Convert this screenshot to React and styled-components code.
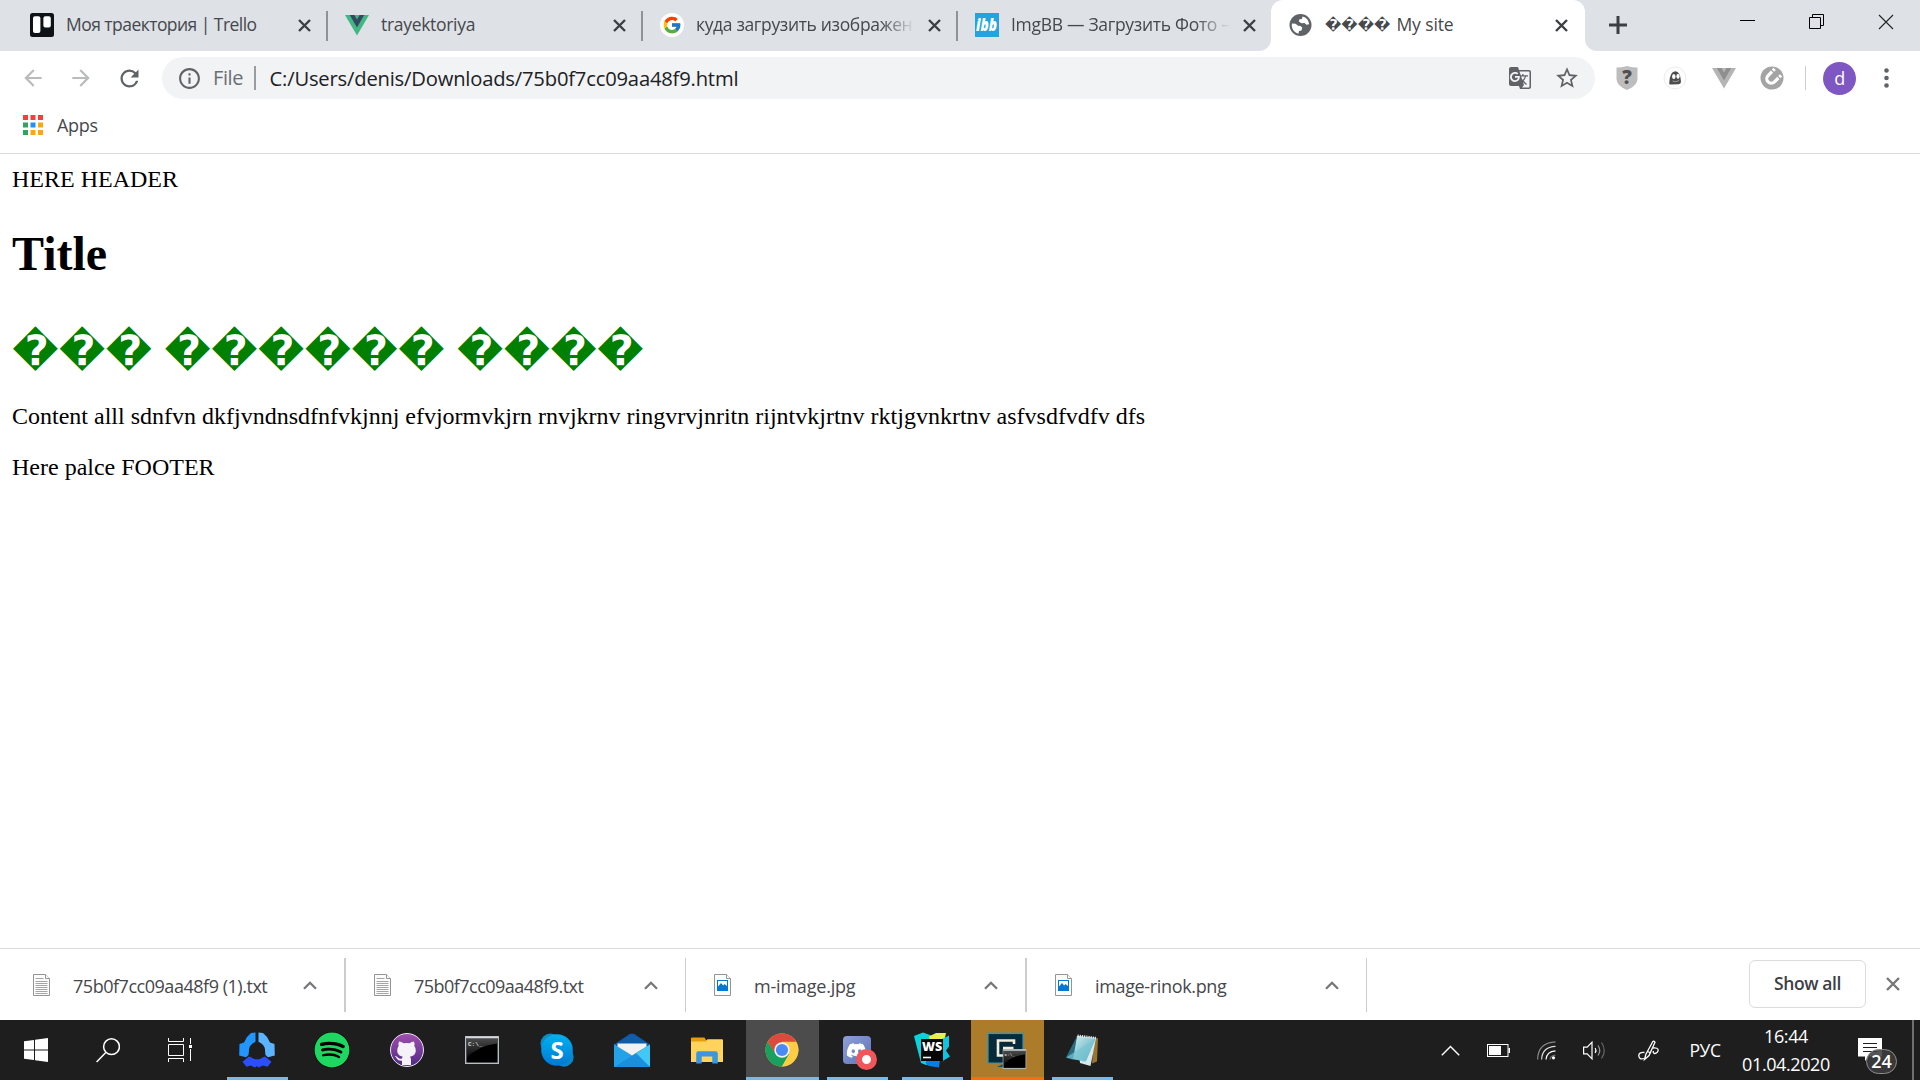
import React from "react";
import styled, { createGlobalStyle, css } from "styled-components";
import {
  MdStarBorder, MdGTranslate, MdInfoOutline, MdArrowBack, MdArrowForward, MdRefresh,
} from "react-icons/md";
import { FcGoogle } from "react-icons/fc";
import { FaSpotify, FaDiscord } from "react-icons/fa";

const GlobalStyle = createGlobalStyle`
  * { box-sizing: border-box; }
  body { margin: 0; background: #fff; overflow: hidden; }
  svg { display: block; flex: none; }
`;

const ui = `"Open Sans", "Noto Sans", sans-serif`;

const Screen = styled.div`
  width: 1920px;
  height: 1080px;
  display: flex;
  flex-direction: column;
  font-family: ${ui};
  background: #fff;
`;

const Label = styled.span`
  font-size: ${(p) => p.$size || 18}px;
  letter-spacing: ${(p) => p.$track || 0}px;
  color: ${(p) => p.$color || "#45484c"};
  line-height: 24px;
  white-space: pre;
`;

/* ---------- tab strip ---------- */

const TabStrip = styled.div`
  flex: none;
  height: 51px;
  padding-left: 12px;
  display: flex;
  background: #dee1e6;
`;

const Tab = styled.div`
  position: relative;
  width: ${(p) => (p.$divider ? 315 : 314)}px;
  height: 51px;
  padding: 0 0 1px 18px;
  display: flex;
  align-items: center;
  ${(p) => p.$divider && css`
    &::after {
      content: "";
      position: absolute;
      right: -1px;
      top: 11px;
      width: 2px;
      height: 30px;
      background: #8f9297;
    }
  `}
  ${(p) => p.$active && css`
    background: #fff;
    border-radius: 12px 12px 0 0;
    &::before, &::after {
      content: "";
      position: absolute;
      bottom: 0;
      width: 12px;
      height: 12px;
    }
    &::before {
      left: -12px;
      background: radial-gradient(circle at 0 0, transparent 11.5px, #fff 12.5px);
    }
    &::after {
      right: -12px;
      background: radial-gradient(circle at 100% 0, transparent 11.5px, #fff 12.5px);
    }
  `}
`;

const TabTitle = styled.div`
  width: 219px;
  height: 26px;
  margin: 0 ${(p) => (p.$gap === undefined ? 7 : p.$gap)}px 2px 12px;
  display: flex;
  align-items: center;
  overflow: hidden;
  white-space: pre;
  ${(p) => p.$fade && css`
    mask-image: linear-gradient(to right, #000 185px, transparent 219px);
  `}
`;

const Unknown = styled.span`
  font-family: "DejaVu Sans", sans-serif;
  font-weight: bold;
  font-size: 14.7px;
  line-height: 24px;
  margin: 2px 6px 0 0;
  color: #45484c;
`;

const CloseBox = styled.div`
  width: 25px;
  height: 24px;
  display: flex;
  align-items: center;
  justify-content: center;
`;

const NewTab = styled.div`
  width: 66px;
  height: 50px;
  display: flex;
  align-items: center;
  justify-content: center;
`;

const WindowButtons = styled.div`
  margin-left: auto;
  height: 43px;
  display: flex;
`;

const WindowButton = styled.div`
  width: 69px;
  display: flex;
  align-items: center;
  justify-content: center;
`;

const GoogleDisc = styled.div`
  width: 24px;
  height: 24px;
  border-radius: 50%;
  background: #fff;
  display: flex;
  align-items: center;
  justify-content: center;
`;

/* ---------- toolbar ---------- */

const Toolbar = styled.div`
  flex: none;
  height: 54px;
  padding: 6px 0 6px 20px;
  display: flex;
  align-items: center;
`;

const NavButtons = styled.div`
  width: 142px;
  display: flex;
  align-items: center;
  gap: 22px;
`;

const Omnibox = styled.div`
  width: 1433px;
  height: 42px;
  border-radius: 21px;
  background: #f1f3f4;
  padding: 0 15px 0 15px;
  display: flex;
  align-items: center;
`;

const Address = styled.div`
  display: flex;
  align-items: center;
  margin-left: 11px;
`;

const Rule = styled.div`
  width: ${(p) => p.$w || 2}px;
  height: 24px;
  margin: 0 ${(p) => p.$right}px 0 ${(p) => p.$left}px;
  background: ${(p) => p.$color};
`;

const OmniActions = styled.div`
  margin-left: auto;
  display: flex;
  align-items: center;
  gap: 22px;
`;

const Extensions = styled.div`
  margin-left: 20px;
  display: flex;
  align-items: center;
`;

const ExtSlot = styled.div`
  width: 24px;
  height: 24px;
  margin-right: 24.3px;
  display: flex;
  align-items: center;
  justify-content: center;
`;

const Avatar = styled.div`
  width: 33px;
  height: 33px;
  margin-right: 28px;
  border-radius: 50%;
  background: #7e57c2;
  color: #fff;
  font-size: 18px;
  line-height: 32px;
  text-align: center;
`;

const Bookmarks = styled.div`
  flex: none;
  height: 49px;
  padding: 0 0 8px 23px;
  border-bottom: 1px solid #d9dadc;
  display: flex;
  align-items: center;
  gap: 14px;
`;

/* ---------- document ---------- */

const Page = styled.main`
  flex: 1;
  padding: 12px;
  font-family: "Liberation Serif", serif;
  font-size: 24px;
  line-height: 27px;
  color: #000;
`;

const Heading = styled.h1`
  margin: 33px 0 31px;
  font-size: 48px;
  line-height: 55px;
  height: 55px;
  font-weight: bold;
  white-space: pre;
`;

const GreenHeading = styled(Heading)`
  margin: 42px 0 25px;
  display: flex;
  gap: 12px;
  align-items: center;
  font-family: "DejaVu Sans", sans-serif;
  font-size: 42px;
  color: #008000;
`;

const Paragraph = styled.p`
  margin: 24px 0;
`;

/* ---------- download shelf ---------- */

const Shelf = styled.div`
  flex: none;
  height: 72px;
  border-top: 1px solid #d9dadc;
  padding: 9px 20px 8px 0;
  display: flex;
`;

const Download = styled.div`
  width: ${(p) => p.$w}px;
  height: 54px;
  padding: 0 27px 0 ${(p) => p.$pad}px;
  border-right: ${(p) => p.$line}px solid #cbcccd;
  display: flex;
  align-items: center;
`;

const FileName = styled.div`
  flex: 1;
  margin-left: 23px;
  padding-top: 2px;
`;

const ShelfEnd = styled.div`
  margin-left: auto;
  height: 52px;
  display: flex;
  align-items: center;
  gap: 20px;
`;

const ShowAll = styled.div`
  width: 117px;
  height: 48px;
  border: 1px solid #dadce0;
  border-radius: 6px;
  color: #3c4043;
  font-size: 17.5px;
  font-weight: 600;
  letter-spacing: -0.4px;
  line-height: 45px;
  text-align: center;
`;

/* ---------- taskbar ---------- */

const Taskbar = styled.div`
  flex: none;
  height: 60px;
  display: flex;
  background: #1e1e1e;
`;

const SystemButton = styled.div`
  width: 72px;
  height: 60px;
  display: flex;
  align-items: center;
  justify-content: center;
`;

const Apps = styled.div`
  display: flex;
  gap: 2px;
  margin-left: 5px;
`;

const tint = { blue: "#76b9ed", orange: "#ff6d00" };

const AppTile = styled.div`
  width: 73px;
  height: 60px;
  display: flex;
  flex-direction: column;
  align-items: center;
  background: ${(p) => p.$bg || "transparent"};
`;

const AppIcon = styled.div`
  height: 57px;
  padding: 3px 2px 0 0;
  display: flex;
  align-items: center;
`;

const Underline = styled.div`
  width: ${(p) => (p.$full ? 73 : 61)}px;
  height: 3px;
  background: ${(p) => tint[p.$tint]};
`;

const SpotifyDisc = styled.div`
  border-radius: 50%;
  background: #000;
`;

const GithubDisc = styled.div`
  width: 34px;
  height: 34px;
  border-radius: 50%;
  border: 1.5px solid #ece6f0;
  background: linear-gradient(#a04fb0, #4f2a84);
  overflow: hidden;
`;

const Tray = styled.div`
  margin-left: auto;
  display: flex;
  align-items: center;
  height: 60px;
`;

const TraySlot = styled.div`
  width: ${(p) => p.$w}px;
  height: 60px;
  padding-left: ${(p) => p.$pad || 0}px;
  display: flex;
  align-items: center;
  justify-content: center;
`;

const Clock = styled.div`
  width: 88px;
  margin-left: 7px;
  display: flex;
  flex-direction: column;
  align-items: center;
  gap: 4px;
  padding-bottom: 1px;
`;

const Notices = styled.div`
  position: relative;
  width: 24px;
  height: 24px;
  margin-left: 28px;
`;

const Badge = styled.div`
  position: absolute;
  left: 8px;
  top: 11px;
  width: 31px;
  height: 25px;
  border-radius: 13px;
  border: 1px solid #8c8c8c;
  background: rgba(62, 62, 62, 0.88);
  color: #fff;
  font-size: 18px;
  font-weight: 600;
  line-height: 22px;
  text-align: center;
`;

const DesktopEdge = styled.div`
  width: 2px;
  height: 60px;
  margin: 0 6px 0 30px;
  background: #6f6f6f;
`;

/* ---------- drawings ---------- */

const Cross = ({ size = 13, color = "#3c4043", width = 2.4 }) => (
  <svg width={size} height={size} viewBox={`0 0 ${size} ${size}`}>
    <path d={`M1 1L${size - 1} ${size - 1}M${size - 1} 1L1 ${size - 1}`} stroke={color} strokeWidth={width} />
  </svg>
);

const Trello = () => (
  <svg width="24" height="24" viewBox="0 0 24 24">
    <rect width="24" height="24" rx="2.5" fill="#0d1317" />
    <rect x="3" y="3.2" width="7.4" height="16.8" rx="2" fill="#fff" />
    <rect x="13.4" y="3.2" width="7.4" height="11.3" rx="2" fill="#fff" />
  </svg>
);

const Ibb = () => (
  <svg width="24" height="24" viewBox="0 0 24 24">
    <rect width="24" height="24" fill="#24a4df" />
    <text x="1" y="18" fontFamily="Open Sans" fontWeight="800" fontStyle="italic" fontSize="17.5" textLength="21" lengthAdjust="spacingAndGlyphs" fill="#fff">ibb</text>
  </svg>
);

const Globe = () => (
  <svg width="24" height="24" viewBox="0 0 24 24">
    <circle cx="11.500" cy="12" r="11" fill="#5f6368" />
    <path d="M2.800 13.500L2.900 10.500 6.500 10.800 9.500 13 11 12.800 13.300 14.500 12.500 17.500 10 18 9.500 20.700Q4 19.500 2.800 13.500z" fill="#fff" />
    <path d="M13.500 3.500Q19.500 5.200 20.200 11.200L17.500 11.800 15.500 10 12.500 10.300 9.800 8.500 10.500 6.300 13 6z" fill="#fff" />
  </svg>
);

const Vue = ({ outer = "#41b883", inner = "#34495e" }) => (
  <svg width="24" height="24" viewBox="0 0 24 24">
    <path d="M0 2h24L12 22.5z" fill={outer} />
    <path d="M4.8 2h4.6L12 6.6 14.6 2h4.6L12 14.4z" fill={inner} />
  </svg>
);

const AppsGrid = () => {
  const colors = ["#f43f3a", "#f43f3a", "#f43f3a", "#34a262", "#2490f5", "#f8a90d", "#34a262", "#f8a90d", "#f8a90d"];
  return (
    <svg width="20" height="20" viewBox="0 0 20 20">
      {colors.map((c, i) => (
        <rect key={i} x={(i % 3) * 7.5} y={Math.floor(i / 3) * 7.5} width="5" height="5" fill={c} />
      ))}
    </svg>
  );
};

const Shield = () => (
  <svg width="22" height="24" viewBox="0 0 22 24">
    <path d="M.5 1.6Q6 1.6 11 0q5 1.6 10.500 1.600V13q0 6.500-10.500 11Q.5 19.500.5 13z" fill="#bdbdbd" />
    <text x="11" y="18" fontFamily="Open Sans" fontWeight="800" fontSize="19" textAnchor="middle" fill="#505050">?</text>
  </svg>
);

const Ghost = () => (
  <svg width="24" height="24" viewBox="0 0 24 24">
    <circle cx="12" cy="12" r="11" fill="#fdfdfd" stroke="#ececec" />
    <path d="M6.200 17.500Q6.500 5.500 12.200 5.200 17.600 5.500 18 15.800 18 18 15.500 18.200L8 18.500Q6.200 18.800 6.200 17.500z" fill="#4c4c4c" />
    <ellipse cx="10.800" cy="10.500" rx="1.700" ry="2.500" fill="#fff" />
    <ellipse cx="15" cy="10.300" rx="1.600" ry="2.500" fill="#fff" />
    <path d="M9.500 15q3.500 1.800 6.500-.6" stroke="#999" fill="none" />
  </svg>
);

const Magnet = () => (
  <svg width="24" height="24" viewBox="0 0 24 24">
    <circle cx="12" cy="12" r="11.500" fill="#a4a4a4" />
    <g transform="rotate(45 12 12)" fill="none" stroke="#fff" strokeWidth="3.200">
      <path d="M7.500 7.500V13a4.500 4.500 0 0 0 9 0V7.500" />
      <path d="M7.500 3.700v2.500M16.500 3.700v2.500" />
    </g>
  </svg>
);

const Dots = () => (
  <svg width="5" height="20" viewBox="0 0 5 20">
    {[2.5, 10, 17.5].map((y) => <circle key={y} cx="2.500" cy={y} r="2.300" fill="#5f6368" />)}
  </svg>
);

const FileIcon = ({ image }) => (
  <svg width="17" height="22" viewBox="0 0 17 22">
    <path d="M.5.5h12l4 4v17H.5z" fill="#fcfcfc" stroke="#949494" />
    <path d="M12.500.5v4h4" fill="#fff" stroke="#949494" />
    {image ? (
      <>
        <rect x="3.500" y="6.500" width="10" height="10" fill="#fff" stroke="#0078d7" />
        <path d="M4 16.500V12.500L7 9l2.200 2.500 1.300-1.500 3 2.500v4z" fill="#0078d7" />
        <rect x="3" y="13" width="11" height="4" fill="#0078d7" />
      </>
    ) : (
      <path d="M2.500 4.500h8M2.500 7.500h12M2.500 9.500h12M2.500 11.500h12M2.500 13.500h12M2.500 15.500h12M2.500 17.500h12M2.500 19.500h12" stroke="#a5a5a5" />
    )}
  </svg>
);

const Chevron = () => (
  <svg width="14" height="9" viewBox="0 0 14 9">
    <path d="M1 7.800L7 1.800l6 6" fill="none" stroke="#757679" strokeWidth="2.300" />
  </svg>
);

const WindowsLogo = () => (
  <svg width="24" height="24" viewBox="0 0 24 24" fill="#fff">
    <path d="M0 3.300L10 2v9.500H0zM11 1.800L24 0v11.500H11zM0 12.500h10V22L0 20.700zM11 12.500h13V24l-13-1.800z" />
  </svg>
);

const SearchGlass = () => (
  <svg width="24" height="25" viewBox="0 0 24 25" fill="none" stroke="#fff" strokeWidth="1.500">
    <circle cx="15.500" cy="8.700" r="7.900" />
    <path d="M9.800 14.500L.6 24" />
  </svg>
);

const TaskView = () => (
  <svg width="24" height="24" viewBox="0 0 24 24" fill="none" stroke="#fff" strokeWidth="1">
    <path d="M.5 0v3.500h15V0M.5 24v-3.500h15V24M.5 6.500h15v11H.5zM22.500 0v6M22.500 11v12" />
    <rect x="21" y="7" width="3" height="3" fill="#fff" stroke="none" />
  </svg>
);

const HubIcon = () => (
  <svg width="36" height="36" viewBox="0 0 36 36">
    <path d="M16.500.5v9.200l-3 1.800q-4 3-3.600 8.200l-.4 3.300-2.500 2.200L.2 23.500.5 12l4.500-1.500L8 5l4-4z" fill="#2196ff" />
    <path d="M19.500.5v9.200l3 1.800q4 3 3.600 8.200l.4 3.300 2.500 2.200 6.800-1.700L35.500 12 31 10.500 28 5l-4-4z" fill="#5bb4ff" />
    <path d="M10 24.500q3 1 4.500 2.300 3.500 1 7 0 1.500-1.300 4.500-2.300l6.500 5.300-4 5L24 33.500 19.500 35.500 18 34l-2 1.500-4.500-2-4 1.200-4-5z" fill="#2b4eff" />
  </svg>
);

const Cmd = ({ w = 34, h = 28 }) => (
  <svg width={w} height={h} viewBox="0 0 34 28">
    <defs>
      <linearGradient id="glass" x1="0" y1="0" x2="0" y2="1">
        <stop offset="0" stopColor="#4b4b4b" />
        <stop offset="1" stopColor="#0a0a0a" />
      </linearGradient>
    </defs>
    <rect x=".7" y=".7" width="32.600" height="26.600" fill="#000" stroke="#b8bfc4" strokeWidth="1.400" />
    <path d="M2 2h30v5.500Q12 10 2 22z" fill="url(#glass)" />
    <path d="M1 1.500h32" stroke="#d5dade" strokeWidth="1.500" />
    <text x="3" y="9.500" fontFamily="Liberation Mono" fontWeight="bold" fontSize="6" fill="#ddd">C:\_</text>
  </svg>
);

const Skype = () => (
  <svg width="34" height="34" viewBox="0 0 34 34">
    <defs>
      <linearGradient id="sky" x1="0" y1="0" x2="0" y2="1">
        <stop offset="0" stopColor="#00b2f0" />
        <stop offset="1" stopColor="#0078d4" />
      </linearGradient>
    </defs>
    <circle cx="10.500" cy="10.500" r="10" fill="#0d8bc4" />
    <circle cx="24" cy="24" r="9.700" fill="#0a86c8" />
    <circle cx="17" cy="17" r="15.800" fill="url(#sky)" />
    <text x="17" y="25.500" fontFamily="Open Sans" fontWeight="700" fontSize="24" textAnchor="middle" fill="#fff">S</text>
  </svg>
);

const Mail = () => (
  <svg width="36" height="34" viewBox="0 0 36 34">
    <path d="M0 11.500L15.500 1.200Q18 -.3 20.500 1.200L36 11.500v5H0z" fill="#0f5cab" />
    <path d="M0 11.500V34l18-11.500z" fill="#35b4f0" />
    <path d="M18 22.500l18-11V34z" fill="#41c8f5" />
    <path d="M0 34L0 11.500 36 34z" fill="#29a7ea" />
    <path d="M0 34L18 22.500 22 20 36 34z" fill="#1b8fdc" />
    <path d="M0 34V11.500L18 22.500z" fill="#24a2e8" />
    <path d="M3.500 10.500h29v3L18 22.500 3.500 13.500z" fill="#f2f2f2" />
  </svg>
);

const Explorer = () => (
  <svg width="32" height="27" viewBox="0 0 32 27">
    <path d="M0 1.500Q0 .5 1 .5h12.500l1.500 2.500h17V8H0z" fill="#e3a008" />
    <path d="M0 4.500h15l1.500-2.300H31q1 0 1 1V25H0z" fill="#ffd35c" />
    <path d="M5.200 26.500V16.500q0-2.300 2.300-2.300h17q2.300 0 2.300 2.300v10h-5.500v-7H10.700v7z" fill="#3a96dd" />
  </svg>
);

const Chrome = () => (
  <svg width="34" height="34" viewBox="0 0 34 34">
    <circle cx="17" cy="17" r="16.500" fill="#ffcd41" />
    <path d="M2.700 8.750A16.500 16.500 0 0 1 31.300 8.750H17L9.900 21.100z" fill="#db4a3c" />
    <path d="M2.700 8.750A16.500 16.500 0 0 0 17 33.500L24.200 21 17 17 10.500 21z" fill="#17a05e" />
    <path d="M17 9h14.300A16.500 16.500 0 0 1 17 33.500L24.200 21z" fill="#ffcd41" />
    <circle cx="17" cy="17" r="7.700" fill="#f1f1f1" />
    <circle cx="17" cy="17" r="6.100" fill="#4a8af4" />
  </svg>
);

const GithubMark = () => (
  <svg width="31" height="31" viewBox="0 0 31 31" fill="#f4f2f6">
    <path d="M8 7.500q2.500 0 4.500 1.800 3-.8 6 0 2-1.800 4.500-1.800 1 2.500.3 4.500 2 2.200 1.500 5.300-.6 4.700-5.800 5.400 1 1.300 1 3V31h-9v-4.300q-4 .3-5.300-2.200-.8-1.800-2-2.500 2.200-.3 3.400 1.700 1.400 1.600 3.900.8.100-1 .8-1.800-5-.8-5.600-5.400-.4-3.200 1.500-5.300-.7-2 .3-4.500z" />
  </svg>
);

const DiscordBox = styled.div`
  position: relative;
  width: 28px;
  height: 28px;
  border-radius: 4px;
  background: linear-gradient(135deg, #8ea0d8, #5d72b8);
  display: flex;
  align-items: center;
  justify-content: center;
  color: #fff;
`;

const RecordDot = styled.div`
  position: absolute;
  left: 13px;
  top: 13px;
  width: 21px;
  height: 21px;
  border-radius: 50%;
  border: 6px solid #f0565a;
  background: #fff;
`;

const WebStorm = () => (
  <svg width="36" height="36" viewBox="0 0 36 36">
    <path d="M0 4L9 .5l7 2.500 10 5-4 24-10 1-5-2z" fill="#0bd3da" />
    <path d="M15 4.500L22 1h10l-2 9H16z" fill="#e9f04e" />
    <path d="M28 7l7-3.500v11l-3 4 4 6-8 5-4-4z" fill="#10c4e0" />
    <path d="M12 28h14l-1 7.500-10-1.500-3-2z" fill="#0a7ede" />
    <rect x="7" y="7" width="22" height="22" fill="#060606" />
    <text x="18" y="19" fontFamily="Open Sans" fontWeight="800" fontSize="12.500" textAnchor="middle" fill="#fff">WS</text>
    <path d="M9 25.500h8" stroke="#fff" strokeWidth="1.600" />
  </svg>
);

const Camtasia = () => (
  <svg width="40" height="37" viewBox="0 0 40 37">
    <rect x=".8" y="1.300" width="35.400" height="30" fill="#072b3a" stroke="#4d9097" strokeWidth="1.600" />
    <path d="M10 35h10l1-3h-5z" fill="#0b5560" />
    <path d="M27 12V8.500H11v15h6M16 16h10.500" fill="none" stroke="#f3eedb" strokeWidth="2.600" />
    <g transform="translate(15.500 17)"><Cmd w={24} h={20} /></g>
  </svg>
);

const Notepad = () => (
  <svg width="34" height="33" viewBox="0 0 34 33">
    <defs>
      <linearGradient id="pad" x1="0" y1="0" x2="1" y2="1">
        <stop offset="0" stopColor="#d5f0f4" />
        <stop offset="1" stopColor="#3ba0b5" />
      </linearGradient>
    </defs>
    <path d="M29 3.500l4 1-1 23-5 2z" fill="#9a7430" />
    <path d="M12 2l19 2-5.500 28L15 29z" fill="#d6e9ee" />
    <path d="M12 2l19 2-10 23-14-2z" fill="url(#pad)" />
    <path d="M12 2L1 23.500 8 26z" fill="#2a6d80" />
    <path d="M1 23.500L20.500 28 30 5z" fill="#7ac5d3" opacity=".7" />
    <path d="M12.500 1.800L31 4" stroke="#e4e4e4" strokeWidth="2.500" strokeDasharray="1.200 1" />
  </svg>
);

const Battery = () => (
  <svg width="23" height="13" viewBox="0 0 23 13">
    <rect x=".5" y=".5" width="20.500" height="12" fill="none" stroke="#fff" />
    <rect x="2" y="2" width="12" height="9" fill="#fff" />
    <rect x="21.500" y="4" width="1.500" height="5" fill="#fff" />
  </svg>
);

const Wifi = () => (
  <svg width="19" height="19" viewBox="0 0 19 19" fill="none" strokeWidth="1.200">
    <path d="M.6 18.500Q1 1.500 18.500.8" stroke="#8a8a8a" />
    <path d="M4.600 18.500Q5 6 18.500 5.300" stroke="#ddd" />
    <path d="M9 18.500Q9.500 10.500 18.500 9.800" stroke="#fff" />
    <path d="M13 18.500Q13.500 14.500 18.500 14" stroke="#777" />
    <circle cx="16.500" cy="16.800" r="1.600" fill="#fff" />
  </svg>
);

const Speaker = () => (
  <svg width="23" height="19" viewBox="0 0 23 19" fill="none" strokeWidth="1.200">
    <path d="M.6 6.200h3.600L9 1.200v16.600L4.200 12.800H.6z" stroke="#fff" />
    <path d="M12.200 7q1.500 2.500 0 5" stroke="#fff" />
    <path d="M15 4.500q3.500 5 0 10" stroke="#999" />
    <path d="M18.500 1.500q5.500 8 0 16" stroke="#666" />
  </svg>
);

const Pen = () => (
  <svg width="21" height="21" viewBox="0 0 21 21" fill="none" stroke="#fff" strokeWidth="1.300">
    <path d="M6.500 19.500l1.300-5L14.500 2q1.500-1.800 2.500.3L11 15.500z" />
    <path d="M9.500 11.500l3.500 1.500M6.500 12.500q-6-.5-5.700 3.500.5 4 5.200 2.500M15 8q5-.5 5.200 2-.2 3-3.700 3.500-2-.5-1-2.500" />
  </svg>
);

const TrayUp = () => (
  <svg width="19" height="11" viewBox="0 0 19 11">
    <path d="M.8 10.200l8.700-8.700 8.700 8.700" fill="none" stroke="#fff" strokeWidth="1.400" />
  </svg>
);

const Bubble = () => (
  <svg width="24" height="24" viewBox="0 0 24 24">
    <path d="M0 0h24v18.500H11L7 23v-4.500H0z" fill="#fff" />
    <path d="M5 5.500h14M5 9.500h14M5 13.500h14" stroke="#1e1e1e" />
  </svg>
);

/* ---------- data ---------- */

const tabs = [
  { icon: <Trello />, title: "Моя траектория | Trello", track: -0.54, divider: true },
  { icon: <Vue />, title: "trayektoriya", track: -0.3, divider: true },
  { icon: <GoogleDisc><FcGoogle size={20} /></GoogleDisc>, title: "куда загрузить изображен", track: -0.35, divider: true, fade: true },
  { icon: <Ibb />, title: "ImgBB — Загрузить Фото –", track: -0.3, fade: true },
];

const downloads = [
  { name: "75b0f7cc09aa48f9 (1).txt", track: -0.47, w: 346, pad: 33, line: 2 },
  { name: "75b0f7cc09aa48f9.txt", track: -0.53, w: 340, pad: 28, line: 1 },
  { name: "m-image.jpg", track: -0.2, image: true, w: 341, pad: 28, line: 2 },
  { name: "image-rinok.png", track: -0.35, image: true, w: 340, pad: 28, line: 1 },
];

const apps = [
  { icon: <HubIcon />, tint: "blue" },
  { icon: <SpotifyDisc><FaSpotify size={36} color="#1ed760" /></SpotifyDisc> },
  { icon: <GithubDisc><GithubMark /></GithubDisc> },
  { icon: <Cmd /> },
  { icon: <Skype /> },
  { icon: <Mail /> },
  { icon: <Explorer /> },
  { icon: <Chrome />, tint: "blue", bg: "#4c4c4c", full: true },
  { icon: <DiscordBox><FaDiscord size={21} /><RecordDot /></DiscordBox>, tint: "blue" },
  { icon: <WebStorm />, tint: "blue" },
  { icon: <Camtasia />, tint: "orange", bg: "#ad7c2b", full: true },
  { icon: <Notepad />, tint: "blue" },
];

export default function App() {
  return (
    <Screen>
      <GlobalStyle />
      <TabStrip>
        {tabs.map((t) => (
          <Tab key={t.title} $divider={t.divider}>
            {t.icon}
            <TabTitle $fade={t.fade}><Label $size={17.5} $track={t.track}>{t.title}</Label></TabTitle>
            <CloseBox><Cross /></CloseBox>
          </Tab>
        ))}
        <Tab $active>
          <Globe />
          <TabTitle $gap={5}>
            <Unknown>����</Unknown>
            <Label $size={17.5} $track={-0.1}>My site</Label>
          </TabTitle>
          <CloseBox><Cross /></CloseBox>
        </Tab>
        <NewTab>
          <svg width="18" height="18" viewBox="0 0 18 18">
            <path d="M9 0v18M0 9h18" stroke="#3c4043" strokeWidth="3" />
          </svg>
        </NewTab>
        <WindowButtons>
          <WindowButton>
            <svg width="15" height="15" viewBox="0 0 15 15"><path d="M0 6.500h15" stroke="#000" /></svg>
          </WindowButton>
          <WindowButton>
            <svg width="15" height="15" viewBox="0 0 15 15" fill="none" stroke="#000">
              <path d="M.5 3.500h11v11H.5zM3.500 3.500v-3h11v11h-3" />
            </svg>
          </WindowButton>
          <WindowButton><Cross size={16} color="#222" width={1.1} /></WindowButton>
        </WindowButtons>
      </TabStrip>

      <Toolbar>
        <NavButtons>
          <MdArrowBack size={26} color="#b9bbbd" />
          <MdArrowForward size={26} color="#b9bbbd" />
          <MdRefresh size={27} color="#5f6368" />
        </NavButtons>
        <Omnibox>
          <MdInfoOutline size={25} color="#5f6368" />
          <Address>
            <Label $size={20} $track={-0.4} $color="#6b6f74">File</Label>
            <Rule $left={11} $right={13.5} $color="#9a9ca0" />
            <Label $size={20.2} $track={-0.19} $color="#202124">C:/Users/denis/Downloads/75b0f7cc09aa48f9.html</Label>
          </Address>
          <OmniActions>
            <MdGTranslate size={24} color="#5f6368" />
            <MdStarBorder size={26} color="#5f6368" />
          </OmniActions>
        </Omnibox>
        <Extensions>
          <ExtSlot><Shield /></ExtSlot>
          <ExtSlot><Ghost /></ExtSlot>
          <ExtSlot><Vue outer="#b5b5b5" inner="#8e8e8e" /></ExtSlot>
          <ExtSlot><Magnet /></ExtSlot>
          <Rule $w={1} $left={-3} $right={17} $color="#cbcccd" />
          <Avatar>d</Avatar>
          <Dots />
        </Extensions>
      </Toolbar>

      <Bookmarks>
        <AppsGrid />
        <Label $track={-0.3}>Apps</Label>
      </Bookmarks>

      <Page>
        HERE HEADER
        <Heading>Title</Heading>
        <GreenHeading>
          <span>���</span>
          <span>������</span>
          <span>����</span>
        </GreenHeading>
        <Paragraph>
          Content alll sdnfvn dkfjvndnsdfnfvkjnnj efvjormvkjrn rnvjkrnv ringvrvjnritn rijntvkjrtnv rktjgvnkrtnv asfvsdfvdfv dfs
        </Paragraph>
        Here palce FOOTER
      </Page>

      <Shelf>
        {downloads.map((d) => (
          <Download key={d.name} $w={d.w} $pad={d.pad} $line={d.line}>
            <FileIcon image={d.image} />
            <FileName><Label $track={d.track}>{d.name}</Label></FileName>
            <Chevron />
          </Download>
        ))}
        <ShelfEnd>
          <ShowAll>Show all</ShowAll>
          <Cross size={14} color="#777" width={2.4} />
        </ShelfEnd>
      </Shelf>

      <Taskbar>
        <SystemButton><WindowsLogo /></SystemButton>
        <SystemButton><SearchGlass /></SystemButton>
        <SystemButton><TaskView /></SystemButton>
        <Apps>
          {apps.map((a, i) => (
            <AppTile key={i} $bg={a.bg}>
              <AppIcon>{a.icon}</AppIcon>
              {a.tint && <Underline $full={a.full} $tint={a.tint} />}
            </AppTile>
          ))}
        </Apps>
        <Tray>
          <TraySlot $w={48}><TrayUp /></TraySlot>
          <TraySlot $w={48}><Battery /></TraySlot>
          <TraySlot $w={48}><Wifi /></TraySlot>
          <TraySlot $w={48}><Speaker /></TraySlot>
          <TraySlot $w={57} $pad={3}><Pen /></TraySlot>
          <TraySlot $w={60}><Label $color="#fff" $size={17.5} $track={-0.4}>РУС</Label></TraySlot>
          <Clock>
            <Label $color="#fff" $track={-0.4}>16:44</Label>
            <Label $color="#fff" $track={-0.4}>01.04.2020</Label>
          </Clock>
          <Notices><Bubble /><Badge>24</Badge></Notices>
          <DesktopEdge />
        </Tray>
      </Taskbar>
    </Screen>
  );
}
